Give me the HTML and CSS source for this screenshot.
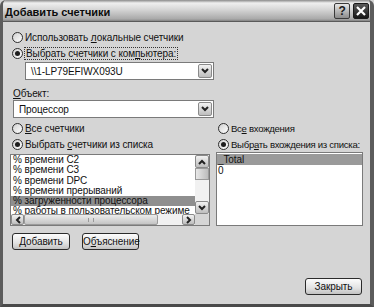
FILE: index.html
```html
<!DOCTYPE html>
<html lang="ru">
<head>
    <meta charset="UTF-8">
    <meta name="viewport" content="width=device-width, initial-scale=1.0">
    <title>Добавить счетчики</title>
    <link rel="stylesheet" href="styles.css">
</head>
<body>

<div class="window">
    <div class="titlebar">
        <span class="title">Добавить счетчики</span>
        <div class="title-buttons">
            <span class="tb-btn tb-help">?</span>
            <span class="tb-btn tb-close">
                <svg width="10" height="10" viewBox="0 0 10 10"><path d="M1 1 L9 9 M9 1 L1 9" stroke="#fff" stroke-width="2.2"/></svg>
            </span>
        </div>
    </div>

    <div class="content">
        <div class="radio"><span class="dot"></span><span>Использовать <u>л</u>окальные счетчики</span></div>
        <div class="radio checked"><span class="dot"></span><span class="focus">Выбрать счетчики с ком<u>п</u>ьютера:</span></div>

        <div class="combo combo-machine">
            <span class="combo-text">\\1-LP79EFIWX093U</span>
            <span class="combo-btn">
                <svg width="8" height="6" viewBox="0 0 8 6"><path d="M1 1 L4 4 L7 1" fill="none" stroke="#222" stroke-width="2"/></svg>
            </span>
        </div>

        <div class="field-label"><u>О</u>бъект:</div>
        <div class="combo combo-object">
            <span class="combo-text">Процессор</span>
            <span class="combo-btn">
                <svg width="8" height="6" viewBox="0 0 8 6"><path d="M1 1 L4 4 L7 1" fill="none" stroke="#222" stroke-width="2"/></svg>
            </span>
        </div>

        <div class="columns">
            <div class="col col-left">
                <div class="radio"><span class="dot"></span><span><u>В</u>се счетчики</span></div>
                <div class="radio checked"><span class="dot"></span><span>Выбрать <u>с</u>четчики из списка</span></div>

                <div class="listbox listbox-counters">
                    <div class="items">
                        <div class="item">% времени C2</div>
                        <div class="item">% времени C3</div>
                        <div class="item">% времени DPC</div>
                        <div class="item">% времени прерываний</div>
                        <div class="item selected">% загруженности процессора</div>
                        <div class="item">% работы в пользовательском режиме</div>
                    </div>
                    <div class="vscroll">
                        <span class="sb-arrow">
                            <svg width="8" height="6" viewBox="0 0 8 6"><path d="M1 5 L4 2 L7 5" fill="none" stroke="#222" stroke-width="2"/></svg>
                        </span>
                        <span class="sb-thumb-v"></span>
                        <span class="sb-track"></span>
                        <span class="sb-arrow">
                            <svg width="8" height="6" viewBox="0 0 8 6"><path d="M1 1 L4 4 L7 1" fill="none" stroke="#222" stroke-width="2"/></svg>
                        </span>
                    </div>
                    <div class="hscroll">
                        <span class="sb-arrow">
                            <svg width="6" height="8" viewBox="0 0 6 8"><path d="M5 1 L2 4 L5 7" fill="none" stroke="#222" stroke-width="2"/></svg>
                        </span>
                        <span class="sb-thumb-h"><span class="grip"></span></span>
                        <span class="sb-track"></span>
                        <span class="sb-arrow">
                            <svg width="6" height="8" viewBox="0 0 6 8"><path d="M1 1 L4 4 L1 7" fill="none" stroke="#222" stroke-width="2"/></svg>
                        </span>
                    </div>
                    <div class="corner"></div>
                </div>

                <div class="button-row">
                    <button class="btn btn-add">Добавить</button>
                    <button class="btn btn-explain">О<u>б</u>ъяснение</button>
                </div>
            </div>

            <div class="col col-right">
                <div class="radio"><span class="dot"></span><span>Вс<u>е</u> вхождения</span></div>
                <div class="radio checked"><span class="dot"></span><span>Выбр<u>а</u>ть вхождения из списка:</span></div>

                <div class="listbox listbox-instances">
                    <div class="item selected">_Total</div>
                    <div class="item">0</div>
                </div>
            </div>
        </div>

        <div class="footer">
            <button class="btn btn-close">Закрыть</button>
        </div>
    </div>
</div>

</body>
</html>
```

FILE: styles.css
```css
* {
    box-sizing: border-box;
}

body {
    margin: 0;
    font-family: "Liberation Sans", Arial, sans-serif;
    font-size: 10px;
    letter-spacing: -0.1px;
    color: #111;
    background-color: #d4d4d4;
}

.window {
    width: 374px;
    height: 307px;
    display: flex;
    flex-direction: column;
    background-color: #d5d5d5;
    border-left: 3px solid #5c5c5c;
    border-right: 4px solid #5c5c5c;
    border-bottom: 3px solid #4a4a4a;
    border-radius: 6px 6px 0 0;
    overflow: hidden;
}

/* title bar */
.titlebar {
    height: 22px;
    flex: none;
    display: flex;
    align-items: center;
    justify-content: space-between;
    margin: 0 -4px 0 -3px;
    padding: 0 5px 0 5px;
    background: linear-gradient(#8a8a8a 0, #efefef 3px, #d8d8d8 9px, #a9a9a9 19px, #6e6e6e 22px);
    border-bottom: 1px solid #5a5a5a;
}

.title {
    font-size: 11px;
    font-weight: bold;
    letter-spacing: 0;
    color: #0c0c0c;
    padding-top: 2px;
}

.title-buttons {
    display: flex;
    gap: 3px;
}

.tb-btn {
    width: 16px;
    height: 16px;
    display: flex;
    align-items: center;
    justify-content: center;
    border: 1px solid #3a3a3a;
    border-radius: 2px;
}

.tb-help {
    background: linear-gradient(#e6e6e6, #8c8c8c);
    font-weight: bold;
    font-size: 12px;
    color: #1a1a1a;
}

.tb-close {
    background: linear-gradient(#5a5a5a, #151515);
    border-color: #1a1a1a;
}

/* dialog body */
.content {
    flex: 1;
    display: flex;
    flex-direction: column;
    padding: 7px 7px 9px 7px;
}

.radio {
    height: 16px;
    display: flex;
    align-items: center;
    margin-left: 2px;
    white-space: nowrap;
}

.dot {
    width: 11px;
    height: 11px;
    flex: none;
    border: 1px solid #2e2e2e;
    border-radius: 50%;
    background: linear-gradient(135deg, #d0d0d0, #ffffff);
    margin-right: 2px;
    position: relative;
}

.checked .dot::after {
    content: "";
    position: absolute;
    left: 2px;
    top: 2px;
    width: 5px;
    height: 5px;
    border-radius: 50%;
    background-color: #1e1e1e;
}

.focus {
    outline: 1px dotted #333;
    outline-offset: 0;
    padding: 0 1px;
}

.combo {
    height: 18px;
    display: flex;
    align-items: center;
    background-color: #fff;
    border: 1px solid #7a7a7a;
    padding: 1px;
}

.combo-machine {
    margin: 1px 0 0 15px;
    width: 189px;
}

.combo-object {
    width: 201px;
    margin-left: 3px;
}

.combo-text {
    flex: 1;
    padding-left: 4px;
}

.combo-btn,
.sb-arrow {
    display: flex;
    align-items: center;
    justify-content: center;
    background: linear-gradient(#f2f2f2, #bdbdbd);
    border: 1px solid #8a8a8a;
    border-radius: 2px;
}

.combo-btn {
    width: 14px;
    height: 14px;
}

.field-label {
    height: 13px;
    line-height: 13px;
    margin: 7px 0 0 3px;
}

.columns {
    display: flex;
    gap: 6px;
    margin-top: 2px;
}

.col-left {
    width: 200px;
}

.col-right {
    width: 147px;
}

.col-right .radio {
    font-size: 9.6px;
    letter-spacing: -0.3px;
}

.listbox {
    background-color: #fff;
    border: 1px solid #7a7a7a;
}

.listbox-counters {
    height: 72px;
    margin-top: 2px;
    display: grid;
    grid-template-columns: 1fr 14px;
    grid-template-rows: 1fr 11px;
    overflow: hidden;
}

.listbox-instances {
    height: 74px;
    padding-top: 1px;
}

.items {
    overflow: hidden;
    white-space: nowrap;
}

.item {
    height: 10.3px;
    line-height: 10.3px;
    padding-left: 2px;
}

.item.selected {
    background-color: #8f8f8f;
}

.listbox-instances .item {
    height: 10.5px;
    line-height: 11px;
    padding-left: 1px;
}

.listbox-instances .item.selected {
    background-color: #9a9a9a;
}

.vscroll {
    display: flex;
    flex-direction: column;
    background-color: #f1f1f1;
}

.vscroll .sb-arrow {
    height: 13px;
}

.sb-thumb-v {
    height: 12px;
    background: linear-gradient(90deg, #e8e8e8, #bcbcbc);
    border: 1px solid #9a9a9a;
}

.sb-track {
    flex: 1;
}

.hscroll {
    display: flex;
    background-color: #f1f1f1;
}

.hscroll .sb-arrow {
    width: 13px;
}

.sb-thumb-h {
    width: 134px;
    display: flex;
    align-items: center;
    justify-content: center;
    background: linear-gradient(#ececec, #c4c4c4);
    border: 1px solid #9a9a9a;
    border-radius: 2px;
}

.grip {
    width: 6px;
    height: 4px;
    border-left: 1px solid #999;
    border-right: 1px solid #999;
}

.corner {
    background-color: #d5d5d5;
}

.button-row {
    display: flex;
    gap: 12px;
    margin: 7px 0 0 2px;
}

.btn {
    height: 17px;
    padding: 0;
    font-family: inherit;
    font-size: 10px;
    letter-spacing: -0.1px;
    color: #111;
    background: linear-gradient(#fcfcfc, #e2e2e2 60%, #c2c2c2);
    border: 1px solid #2b2b2b;
    border-radius: 3px;
}

.btn-add {
    width: 58px;
}

.btn-explain {
    width: 57px;
}

.footer {
    margin-top: auto;
    display: flex;
    justify-content: flex-end;
    padding-right: 1px;
}

.btn-close {
    width: 57px;
}
```
